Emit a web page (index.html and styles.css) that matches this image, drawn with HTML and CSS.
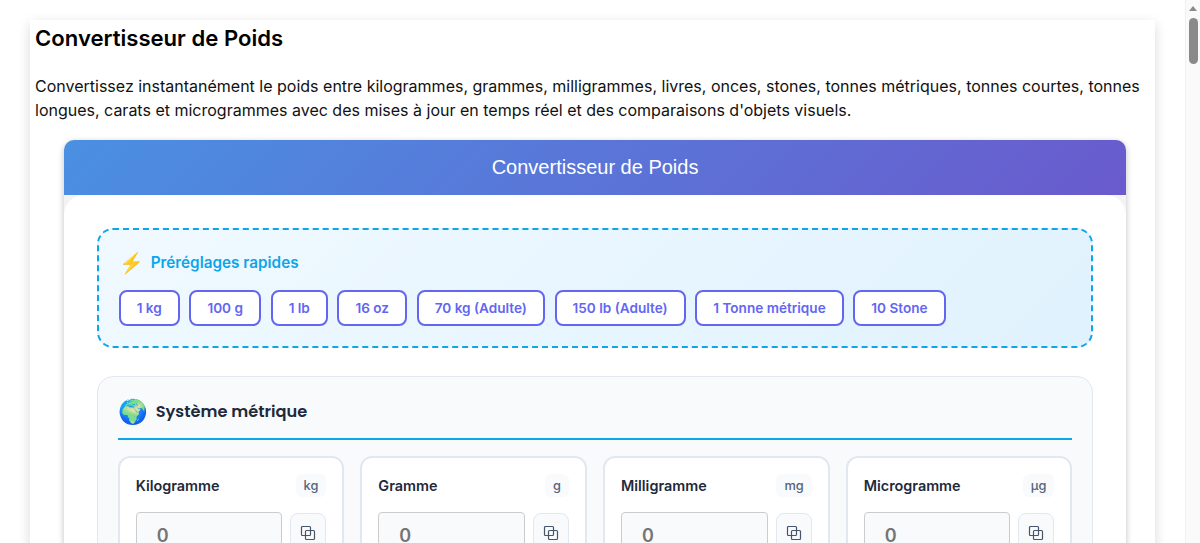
FILE: index.html
```html
<!DOCTYPE html>
<html lang="fr">
<head>
<meta charset="utf-8">
<title>Convertisseur de Poids</title>
<link rel="stylesheet" href="styles.css">
</head>
<body>
<main class="page">
  <h1 class="page-title">Convertisseur de Poids</h1>
  <p class="intro">Convertissez instantanément le poids entre kilogrammes, grammes, milligrammes, livres, onces, stones, tonnes métriques, tonnes courtes, tonnes longues, carats et microgrammes avec des mises à jour en temps réel et des comparaisons d'objets visuels.</p>
  <section class="widget">
    <header class="widget-head">Convertisseur de Poids</header>
    <div class="widget-body">
      <section class="presets">
        <h2 class="presets-title"><span class="bolt">⚡</span>Préréglages rapides</h2>
        <div class="preset-list">
          <button class="preset">1 kg</button>
          <button class="preset">100 g</button>
          <button class="preset">1 lb</button>
          <button class="preset">16 oz</button>
          <button class="preset">70 kg (Adulte)</button>
          <button class="preset">150 lb (Adulte)</button>
          <button class="preset">1 Tonne métrique</button>
          <button class="preset">10 Stone</button>
        </div>
      </section>
      <section class="system">
        <h2 class="system-title"><span class="globe">🌍</span>Système métrique</h2>
        <div class="unit-grid">
          <div class="card">
            <div class="card-head"><span class="label">Kilogramme</span><span class="unit">kg</span></div>
            <div class="field"><input class="value" placeholder="0"><button class="copy"><svg viewBox="0 0 16 16" class="copy-icon"><rect x="1.5" y="1.5" width="9" height="9" rx="1"/><rect x="5.5" y="5.5" width="9" height="9" rx="1"/></svg></button></div>
          </div>
          <div class="card">
            <div class="card-head"><span class="label">Gramme</span><span class="unit">g</span></div>
            <div class="field"><input class="value" placeholder="0"><button class="copy"><svg viewBox="0 0 16 16" class="copy-icon"><rect x="1.5" y="1.5" width="9" height="9" rx="1"/><rect x="5.5" y="5.5" width="9" height="9" rx="1"/></svg></button></div>
          </div>
          <div class="card">
            <div class="card-head"><span class="label">Milligramme</span><span class="unit">mg</span></div>
            <div class="field"><input class="value" placeholder="0"><button class="copy"><svg viewBox="0 0 16 16" class="copy-icon"><rect x="1.5" y="1.5" width="9" height="9" rx="1"/><rect x="5.5" y="5.5" width="9" height="9" rx="1"/></svg></button></div>
          </div>
          <div class="card">
            <div class="card-head"><span class="label">Microgramme</span><span class="unit">µg</span></div>
            <div class="field"><input class="value" placeholder="0"><button class="copy"><svg viewBox="0 0 16 16" class="copy-icon"><rect x="1.5" y="1.5" width="9" height="9" rx="1"/><rect x="5.5" y="5.5" width="9" height="9" rx="1"/></svg></button></div>
          </div>
        </div>
      </section>
    </div>
  </section>
</main>
<div class="scrollbar" aria-hidden="true"><span class="scroll-arrow"></span><span class="scroll-thumb"></span></div>
</body>
</html>
```
FILE: styles.css
```css
* { box-sizing: border-box; }
body {
  margin: 0;
  padding: 20px 45px 20px 30px;
  background: #fff;
  font-family: Inter, "Liberation Sans", sans-serif;
  color: #111;
}
.page {
  background: #fff;
  padding: 5px;
  box-shadow: 0 4px 12px rgba(0, 0, 0, 0.15);
}
.page-title {
  margin: 0 0 22px;
  font-size: 22.1px;
  line-height: 27px;
  font-weight: 600;
  color: #000;
}
.intro {
  margin: 0 0 18px;
  font-size: 16px;
  line-height: 24px;
}
.widget {
  margin: 0 23.6px 0 28.7px;
  border-radius: 10px;
  background: #f3f3f3;
  box-shadow: 0 2px 6px rgba(0, 0, 0, 0.25);
  overflow: hidden;
}
.widget-head {
  height: 55px;
  display: flex;
  align-items: center;
  justify-content: center;
  background: linear-gradient(135deg, #4a90e2, #6a5acd);
  color: #fff;
  font-size: 20px;
  font-family: "Liberation Sans", sans-serif;
}
.widget-body {
  background: #fff;
  border-radius: 20px;
  padding: 33px;
}
.presets {
  height: 120px;
  border: 2px dashed #0ea5e9;
  border-radius: 16px;
  background: linear-gradient(135deg, #f0f9ff, #e0f2fe);
  padding: 21px 20px 20px;
  margin-bottom: 28px;
}
.presets-title {
  display: flex;
  align-items: center;
  gap: 7px;
  margin: 0 0 15px;
  font-size: 15.3px;
  line-height: 24px;
  font-weight: 600;
  color: #0ea5e9;
}
.bolt { font-size: 20px; }
.preset-list { display: flex; gap: 9.6px; }
.preset {
  height: 36px;
  padding: 0 16px;
  border: 2px solid #6366f1;
  border-radius: 8px;
  background: #fff;
  color: #6366f1;
  font-family: Inter, sans-serif;
  font-size: 13.6px;
  font-weight: 600;
}
.system {
  background: #f8fafc;
  border: 1px solid #e2e8f0;
  border-radius: 16px;
  padding: 20px;
}
.system-title {
  display: flex;
  align-items: center;
  gap: 8px;
  margin: 0 0 16px;
  padding-bottom: 12px;
  border-bottom: 2px solid #0ea5e9;
  font-family: Poppins, Inter, sans-serif;
  font-size: 16.2px;
  line-height: 29px;
  font-weight: 600;
  color: #1e293b;
}
.globe { font-size: 24px; }
.unit-grid { display: grid; grid-template-columns: repeat(4, minmax(0, 1fr)); gap: 16px; }
.card {
  background: #fff;
  border: 2px solid #e2e8f0;
  border-radius: 12px;
  padding: 16px;
  height: 160px;
}
.card-head {
  display: flex;
  justify-content: space-between;
  align-items: center;
  margin-bottom: 15px;
}
.label { font-size: 14.4px; font-weight: 600; color: #1e293b; }
.unit {
  padding: 4px 8px;
  border-radius: 6px;
  background: #f8fafc;
  font-size: 12.8px;
  font-weight: 500;
  color: #55637a;
}
.field { display: flex; gap: 8px; }
.value {
  flex: 1;
  min-width: 0;
  height: 46px;
  padding: 0 20px;
  border: 1px solid #ccc;
  border-radius: 4px;
  background: #f8fafc;
  font-family: Inter, sans-serif;
  font-size: 18px;
  font-weight: 600;
}
.value::placeholder { color: #757575; opacity: 1; }
.copy {
  width: 36px;
  height: 40px;
  flex: none;
  margin-top: 1px;
  padding: 0;
  display: flex;
  align-items: center;
  justify-content: center;
  border: 1px solid #e2e8f0;
  border-radius: 8px;
  background: #f8fafc;
}
.copy-icon { width: 16px; height: 16px; fill: none; stroke: #475569; stroke-width: 1.2; }
.scrollbar {
  position: fixed;
  top: 0;
  right: 0;
  bottom: 0;
  width: 15px;
  background: #fafafa;
  border-left: 1px solid #f0f0f0;
}
.scroll-arrow {
  position: absolute;
  top: 6px;
  left: 3px;
  border-left: 4.5px solid transparent;
  border-right: 4.5px solid transparent;
  border-bottom: 5px solid #8a8a8a;
}
.scroll-thumb {
  position: absolute;
  top: 18px;
  left: 3px;
  width: 9px;
  height: 46px;
  border-radius: 5px;
  background: #8a8a8a;
}
```
